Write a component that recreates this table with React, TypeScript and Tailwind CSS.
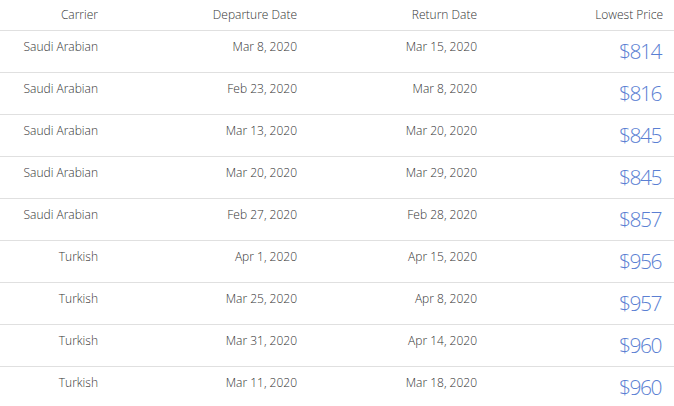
import React from "react";

const rows = [
  ["Saudi Arabian", "Mar 8, 2020", "Mar 15, 2020", "$814"],
  ["Saudi Arabian", "Feb 23, 2020", "Mar 8, 2020", "$816"],
  ["Saudi Arabian", "Mar 13, 2020", "Mar 20, 2020", "$845"],
  ["Saudi Arabian", "Mar 20, 2020", "Mar 29, 2020", "$845"],
  ["Saudi Arabian", "Feb 27, 2020", "Feb 28, 2020", "$857"],
  ["Turkish", "Apr 1, 2020", "Apr 15, 2020", "$956"],
  ["Turkish", "Mar 25, 2020", "Apr 8, 2020", "$957"],
  ["Turkish", "Mar 31, 2020", "Apr 14, 2020", "$960"],
  ["Turkish", "Mar 11, 2020", "Mar 18, 2020", "$960"],
];

export default function App() {
  return (
    <div className="w-[674px] h-[406px] overflow-hidden bg-white text-[#333] text-[12px] font-light" style={{ fontFamily: "'Open Sans', 'Noto Sans', sans-serif" }}>
      <div className="grid grid-cols-[108px_199px_180px_187px] h-[31px] border-b border-[#e0e0e0] items-start pt-[6px]">
        <div className="text-right pr-[10px]">Carrier</div>
        <div className="text-right pr-[10px]">Departure Date</div>
        <div className="text-right pr-[10px]">Return Date</div>
        <div className="text-right pr-[11px]">Lowest Price</div>
      </div>
      {rows.map((r, i) => (
        <div key={i} className="grid grid-cols-[108px_199px_180px_187px] h-[42px] border-b border-[#e0e0e0] items-start">
          <div className="text-right pr-[10px] pt-[7px]">{r[0]}</div>
          <div className="text-right pr-[10px] pt-[7px]">{r[1]}</div>
          <div className="text-right pr-[10px] pt-[7px]">{r[2]}</div>
          <div className="text-right pr-[13px] pt-[6px] text-[21px] leading-[28px] tracking-[-1.5px] text-[#5b7fd3]">{r[3]}</div>
        </div>
      ))}
    </div>
  );
}
